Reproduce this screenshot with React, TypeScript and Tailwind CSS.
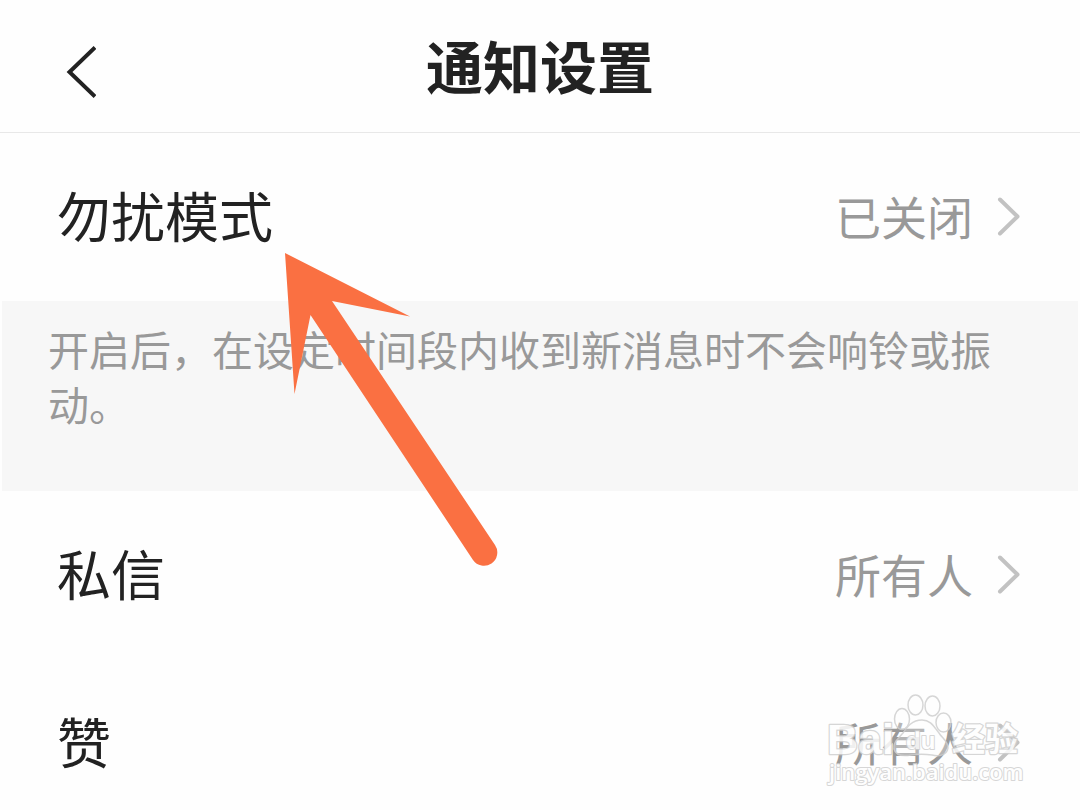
import { ReactNode } from "react";

const settings = [
  {
    label: "勿扰模式",
    value: "已关闭",
    note: "开启后，在设定时间段内收到新消息时不会响铃或振动。",
  },
  { label: "私信", value: "所有人" },
  { label: "赞", value: "所有人" },
];

const BackIcon = () => (
  <svg width="32" height="52" viewBox="0 0 32 52" fill="none" stroke="#222222" strokeWidth="4">
    <path d="M31 1.5 L5.5 26 L31 50.5" />
  </svg>
);

const ChevronIcon = () => (
  <svg width="24" height="40" viewBox="0 0 24 40" fill="none" stroke="#c2c2c2" strokeWidth="4" strokeLinecap="round" strokeLinejoin="round">
    <path d="M3 2.5 L20.5 19.5 L3 36.5" />
  </svg>
);

function SettingRow({ label, value }: { label: string; value: string }) {
  return (
    <button type="button" className="flex h-42 w-full items-center justify-between pr-[59px] pl-[57px] text-left">
      <span className="pb-1 text-[54px] leading-[60px] text-[#222222]">{label}</span>
      <span className="flex items-center gap-6 text-[46px] leading-[60px] text-[#999999]">
        <span className="pb-1">{value}</span>
        <ChevronIcon />
      </span>
    </button>
  );
}

function Note({ children }: { children: ReactNode }) {
  return (
    <p className="mx-[2px] min-h-[190px] bg-[#f7f7f7] pt-5 pr-[70px] pl-[46px] text-[41px] leading-[55px] text-[#999999]">
      {children}
    </p>
  );
}

function Arrow() {
  return (
    <svg
      className="pointer-events-none absolute top-[253px] left-[284px]"
      width="214"
      height="314"
      viewBox="284 253 214 314"
      fill="#fa7042"
      aria-hidden="true"
    >
      <path d="M285 253 L410 316.5 L332 301 L495 545 A13 13 0 0 1 473 560 L310.5 315 L294.5 394 Z" />
    </svg>
  );
}

function Watermark() {
  return (
    <svg
      className="pointer-events-none absolute right-[54px] bottom-[18px]"
      width="202"
      height="102"
      viewBox="824 690 202 102"
      fill="#ffffff"
      stroke="#d0d0d0"
      strokeWidth="2"
      strokeLinejoin="round"
      opacity="0.85"
    >
      <g fillOpacity="0.35" strokeWidth="1.5">
        <ellipse cx="915.5" cy="705" rx="7.5" ry="10" />
        <ellipse cx="932.5" cy="706" rx="7.5" ry="10" />
        <ellipse cx="902" cy="719" rx="7.5" ry="10.5" />
        <ellipse cx="943.5" cy="722.5" rx="7.5" ry="9.5" />
        <path d="M922 720 C912 720 907 727 903 733 C898 739 893 742 894 749 C896 757 905 756 911 755 C918 754 925 754 932 755 C939 757 947 755 948 748 C948 741 942 738 939 733 C934 727 931 720 922 720 Z" />
      </g>
      <g className="font-bold [paint-order:stroke]">
        <text x="827" y="754" strokeWidth="2.5" className="font-['Liberation_Sans',sans-serif] text-[43px]">
          Bai
        </text>
        <text x="906" y="749" className="font-['Liberation_Sans',sans-serif] text-[24px]">
          du
        </text>
        <text x="952" y="751" strokeWidth="2.5" className="font-['Noto_Sans_CJK_SC',sans-serif] text-[33px]">
          经验
        </text>
        <text x="829" y="780" className="font-['Open_Sans',sans-serif] text-[22px] font-semibold">
          jingyan.baidu.com
        </text>
      </g>
    </svg>
  );
}

export default function App() {
  return (
    <div lang="zh-CN" className="relative h-screen overflow-hidden bg-[#fefefe] font-['Noto_Sans_CJK_SC',sans-serif]">
      <header className="grid h-[133px] grid-cols-[1fr_auto_1fr] items-center border-b border-[#e8e8e8] px-16">
        <button type="button" aria-label="返回" className="mt-3 justify-self-start">
          <BackIcon />
        </button>
        <h1 className="pb-1 text-[57px] leading-[60px] font-bold text-[#222222]">通知设置</h1>
      </header>

      <main>
        {settings.map(({ label, value, note }) => (
          <section key={label}>
            <SettingRow label={label} value={value} />
            {note && <Note>{note}</Note>}
          </section>
        ))}
      </main>

      <Arrow />
      <Watermark />
    </div>
  );
}
